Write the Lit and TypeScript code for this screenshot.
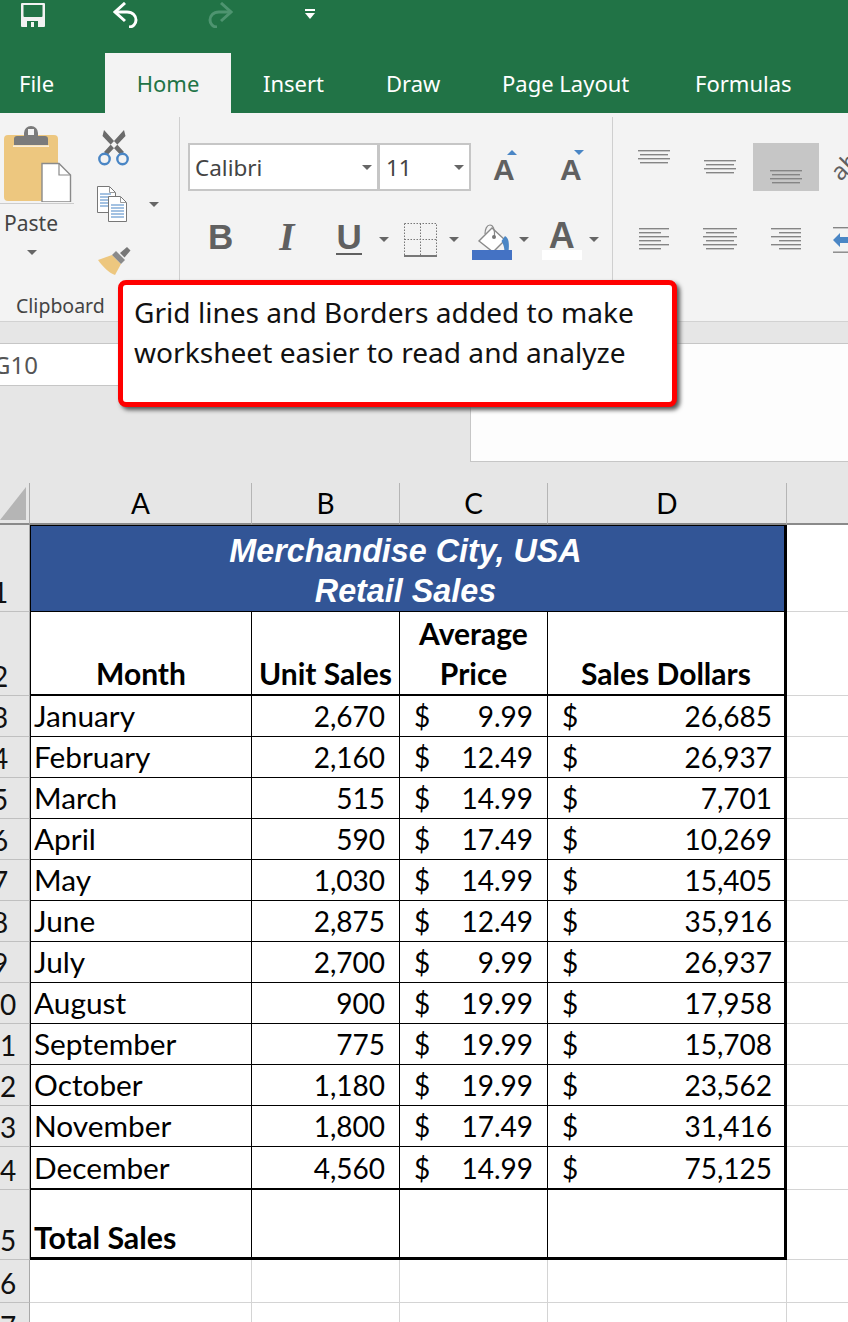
import { LitElement, css, html, svg } from 'lit'
import { customElement } from 'lit/decorators.js'

const months: [string, string, string, string][] = [
  ['January', '2,670', '9.99', '26,685'],
  ['February', '2,160', '12.49', '26,937'],
  ['March', '515', '14.99', '7,701'],
  ['April', '590', '17.49', '10,269'],
  ['May', '1,030', '14.99', '15,405'],
  ['June', '2,875', '12.49', '35,916'],
  ['July', '2,700', '9.99', '26,937'],
  ['August', '900', '19.99', '17,958'],
  ['September', '775', '19.99', '15,708'],
  ['October', '1,180', '19.99', '23,562'],
  ['November', '1,800', '17.49', '31,416'],
  ['December', '4,560', '14.99', '75,125'],
]

// stacked text lines used by the alignment buttons, [x, width] per line
const textLines = (w: number, lines: [number, number][]) => html`<svg
  width=${w}
  height=${lines.length * 4}
  viewBox="0 0 ${w} ${lines.length * 4}"
>
  ${lines.map(([x, lw], i) => svg`<rect x=${x} y=${i * 4 + 1} width=${lw} height="1.4" fill="#858585" />`)}
</svg>`

const vLines: [number, number][] = [
  [0, 32],
  [2, 28],
  [0, 32],
  [2, 28],
]
const leftLines: [number, number][] = [
  [0, 30],
  [0, 22],
  [0, 30],
  [0, 22],
  [0, 30],
  [0, 22],
]
const centerLines: [number, number][] = [
  [0, 34],
  [3, 28],
  [0, 34],
  [3, 28],
  [0, 34],
  [3, 28],
]
const rightLines: [number, number][] = [
  [0, 30],
  [8, 22],
  [0, 30],
  [8, 22],
  [0, 30],
  [8, 22],
]

@customElement('app-root')
export class AppRoot extends LitElement {
  static styles = css`
    :host {
      display: block;
      width: 848px;
      height: 1322px;
      overflow: hidden;
      position: relative;
      background: #fff;
      font-family: 'Noto Sans', sans-serif;
    }
    svg {
      display: block;
      flex: none;
    }

    .titlebar {
      background: #217346;
      height: 113px;
      display: flex;
      flex-direction: column;
    }
    .qat {
      height: 53px;
      display: flex;
      align-items: flex-start;
      padding: 2px 0 0 20px;
      box-sizing: border-box;
    }
    .qat .undo {
      margin-left: 67px;
    }
    .qat .redo {
      margin-left: 66px;
    }
    .qat .more {
      margin: 7px 0 0 72px;
    }
    .tabs {
      display: grid;
      grid-template-columns: 105px 126px 123px 116px 193px 1fr;
      height: 60px;
      color: #fff;
      font-size: 22px;
    }
    .tab {
      display: flex;
      align-items: center;
      padding: 0 0 1px 32px;
    }
    .tab.file {
      padding-left: 19px;
    }
    .tab.active {
      justify-content: center;
      padding-left: 0;
      background: #f3f3f3;
      color: #217346;
    }

    .ribbon {
      height: 209px;
      background: #f3f3f3;
      border-bottom: 1px solid #d2d2d2;
      box-sizing: border-box;
      display: flex;
      color: #444;
    }
    .group {
      margin-top: 4px;
      height: 204px;
      box-sizing: border-box;
      border-right: 1px solid #cfcfcf;
      flex: none;
    }
    .clip {
      width: 180px;
      display: grid;
      grid-template-columns: 76px 1fr;
      grid-template-rows: 1fr auto;
    }
    .paste {
      display: flex;
      flex-direction: column;
      padding-top: 9px;
    }
    .paste .rule {
      height: 1px;
      background: #ccc;
      width: 74px;
      margin-top: 1px;
    }
    .paste .label {
      font-size: 21px;
      line-height: 30px;
      margin: 4px 0 0 4px;
    }
    .paste .caret {
      margin: 12px 0 0 27px;
    }
    .tools {
      display: flex;
      flex-direction: column;
      padding: 13px 0 0 21px;
    }
    .copy-row {
      display: flex;
      align-items: center;
      margin-top: 20px;
    }
    .copy-row .caret {
      margin-left: 21px;
    }
    .brush {
      margin-top: 25px;
    }
    .group-label {
      grid-column: span 2;
      padding: 0 0 1px 16px;
      font-size: 19.5px;
      line-height: 28px;
      color: #444;
    }
    .caret {
      width: 0;
      height: 0;
      border-left: 5px solid transparent;
      border-right: 5px solid transparent;
      border-top: 5px solid #666;
      flex: none;
    }

    .font {
      width: 433px;
      padding: 26px 0 0 8px;
    }
    .font-row {
      display: flex;
      align-items: center;
      height: 48px;
    }
    .select {
      height: 48px;
      box-sizing: border-box;
      background: #fff;
      border: 2px solid #c6c6c6;
      display: flex;
      align-items: center;
      justify-content: space-between;
      padding: 0 5px 0 5px;
      font-size: 22.5px;
      color: #444;
    }
    .select.name {
      width: 191px;
    }
    .select.size {
      width: 93px;
      margin-left: -1px;
      padding-left: 6px;
    }
    .grow {
      position: relative;
      font: bold 30px 'Liberation Sans', sans-serif;
      color: #606060;
      width: 25px;
      line-height: 32px;
      margin-left: 22px;
      margin-top: 6px;
    }
    .grow + .grow {
      margin-left: 42px;
    }
    .grow i {
      position: absolute;
      left: 14px;
      top: -4px;
      width: 0;
      height: 0;
      border-left: 5.5px solid transparent;
      border-right: 5.5px solid transparent;
      border-bottom: 5px solid #4a86c5;
    }
    .grow i.down {
      border-bottom: 0;
      border-top: 5px solid #4a86c5;
    }
    .format-row {
      display: flex;
      align-items: center;
      margin-top: 26px;
      height: 40px;
      color: #606060;
    }
    .fmt {
      font: bold 35px/40px 'Liberation Sans', sans-serif;
      flex: none;
    }
    .fmt.b {
      margin-left: 20px;
    }
    .fmt.i {
      font: italic bold 39px/40px 'Liberation Serif', serif;
      margin-left: 46px;
    }
    .fmt.u {
      margin-left: 42px;
      border-bottom: 2px solid #606060;
      line-height: 32px;
      height: 32px;
      margin-top: 2px;
    }
    .format-row .caret {
      margin: 4px 0 0 17px;
    }
    .borders {
      margin: 5px 0 0 15px;
    }
    .format-row .caret.tight {
      margin-left: 12px;
    }
    .paint {
      margin: 9px 0 0 13px;
    }
    .format-row .caret.paint-caret {
      margin-left: 7px;
    }
    .color-a {
      margin: 10px 0 0 13px;
      width: 40px;
      display: flex;
      flex-direction: column;
      align-items: center;
      height: 40px;
    }
    .color-a b {
      font: bold 36px/28px 'Liberation Sans', sans-serif;
      height: 28px;
    }
    .color-a span {
      width: 40px;
      height: 10px;
      background: #fff;
    }

    .align {
      flex: 1;
      margin-top: 4px;
      display: grid;
      grid-template-columns: repeat(3, 66px) 1fr;
      grid-template-rows: 48px 48px;
      row-gap: 24px;
      padding: 26px 0 0 8px;
      min-width: 0;
      overflow: hidden;
    }
    .a-cell {
      display: flex;
      justify-content: center;
      padding: 6px 0;
      box-sizing: border-box;
    }
    .a-cell.mid {
      align-items: center;
    }
    .a-cell.end {
      align-items: flex-end;
      background: #c6c6c6;
    }
    .a-cell.row2 {
      align-items: center;
    }
    .ab {
      font-size: 24px;
      color: #606060;
      transform: rotate(-45deg);
      margin: 5px 0 0 15px;
      line-height: 32px;
      justify-self: start;
    }
    .indent {
      margin: 12px 0 0 14px;
    }

    .formula-area {
      background: #e6e6e6;
      height: 161px;
      padding-top: 21px;
      box-sizing: border-box;
      display: flex;
      align-items: flex-start;
    }
    .namebox {
      width: 300px;
      height: 43px;
      flex: none;
      background: #fff;
      box-sizing: border-box;
      border-top: 1px solid #c6c6c6;
      border-bottom: 1px solid #c6c6c6;
      overflow: hidden;
      display: flex;
      align-items: center;
      font-size: 24px;
      color: #555;
      text-indent: -7px;
    }
    .formula {
      margin-left: 170px;
      flex: 1;
      height: 119px;
      background: #fdfdfd;
      box-sizing: border-box;
      border-top: 1px solid #c6c6c6;
      border-left: 1px solid #c6c6c6;
      border-bottom: 1px solid #c6c6c6;
    }

    .callout {
      position: absolute;
      left: 118px;
      top: 280px;
      width: 559px;
      height: 127px;
      box-sizing: border-box;
      background: #fff;
      border: 5px solid #ff0000;
      border-radius: 8px;
      box-shadow: 3px 3px 4px #555;
      padding: 7px 0 0 11px;
      font-size: 28.1px;
      line-height: 40px;
      color: #111;
      white-space: pre;
    }

    .sheet {
      display: grid;
      grid-template-columns: 30px 222px 148px 148px 239px 61px;
      grid-template-rows: 42px 87px 84px 41px repeat(10, 41px) 43px 70px 43px 43px;
      font-family: Lato, sans-serif;
      font-size: 28px;
      color: #000;
    }
    .corner {
      background: #e6e6e6;
      border-right: 1px solid #aaa;
      border-bottom: 2px solid #8a8a8a;
      box-sizing: border-box;
      display: flex;
      align-items: flex-start;
      padding-top: 4px;
    }
    .col {
      background: #e6e6e6;
      border-right: 1px solid #b5b5b5;
      border-bottom: 2px solid #8a8a8a;
      box-sizing: border-box;
      display: flex;
      align-items: center;
      justify-content: center;
    }
    .col.last {
      border-right: 0;
    }
    .rh {
      background: #e6e6e6;
      border-right: 1px solid #a8a8a8;
      border-bottom: 1px solid #c0c0c0;
      box-sizing: border-box;
      overflow: hidden;
      display: flex;
      align-items: flex-end;
      line-height: 38px;
      color: #111;
    }
    /* the window is cropped through the middle of the row numbers */
    .rh span {
      flex: none;
      width: 60px;
      margin-left: -30px;
      text-align: center;
    }
    .cell {
      box-sizing: border-box;
      display: flex;
      align-items: flex-end;
      line-height: 40px;
      border-right: 1px solid #000;
      border-bottom: 1px solid #000;
      min-width: 0;
      white-space: nowrap;
    }
    .cell.a {
      border-left: 1px solid #000;
      padding-left: 3px;
      font-size: 29.8px;
    }
    .cell.d {
      border-right: 3px solid #000;
    }
    .cell.num {
      justify-content: flex-end;
      padding-right: 14px;
    }
    .cell.money {
      justify-content: space-between;
      padding: 0 14px;
    }
    .cell.money.d {
      padding-right: 12px;
    }
    .cell.head {
      font-weight: 700;
      font-size: 30px;
      justify-content: center;
      text-align: center;
      padding: 0 0 1px;
    }
    .cell.thick {
      border-bottom-width: 2px;
    }
    .cell.heavy {
      border-bottom-width: 3px;
    }
    .cell.bold {
      font-weight: 700;
      font-size: 30.4px;
    }
    .title {
      grid-column: span 4;
      background: #325596;
      color: #fff;
      font: italic bold 32.3px/40px 'Liberation Sans', sans-serif;
      text-align: center;
      border-left: 1px solid #000;
      border-top: 1px solid #000;
      border-right: 3px solid #000;
      border-bottom: 1px solid #000;
      box-sizing: border-box;
      padding: 5px 4px 0 0;
      white-space: nowrap;
    }
    .blank {
      border-right: 1px solid #d4d4d4;
      border-bottom: 1px solid #d4d4d4;
      box-sizing: border-box;
    }
    .blank.open {
      border-right: 0;
    }
  `

  private blankRow(label: number) {
    return html`
      <div class="rh"><span>${label}</span></div>
      <div class="blank"></div>
      <div class="blank"></div>
      <div class="blank"></div>
      <div class="blank"></div>
      <div class="blank open"></div>
    `
  }

  private renderRibbon() {
    return html`
      <div class="ribbon">
        <div class="group clip">
          <div class="paste">
            <svg width="74" height="76" viewBox="0 0 74 76">
              <rect x="4" y="9" width="54" height="66" rx="4" fill="#edc77f" />
              <path d="M14 19v-6a3 3 0 0 1 3-3h7v-3a7 7 0 0 1 14 0v3h7a3 3 0 0 1 3 3v6z" fill="#7b7b7b" />
              <rect x="13" y="19.500" width="36" height="1.200" fill="#fff" />
              <rect x="28" y="3" width="6" height="6" fill="#f3f3f3" />
              <path d="M42 37.500h17l11.500 11.500v27h-28.500z" fill="#fff" stroke="#8a8a8a" stroke-width="1.400" />
              <path d="M59 37.500v11.500h11.500" fill="none" stroke="#8a8a8a" stroke-width="1.200" />
            </svg>
            <div class="rule"></div>
            <div class="label">Paste</div>
            <div class="caret"></div>
          </div>
          <div class="tools">
            <svg width="34" height="36" viewBox="0 0 34 36">
              <path d="M7 0l20 22-3.500 3-18-19zM27 0l-20 22 3.500 3 18-19z" fill="#6b6b6b" />
              <circle cx="7.500" cy="29" r="5.200" fill="#f3f3f3" stroke="#4a86c5" stroke-width="2.400" />
              <circle cx="25.500" cy="29" r="5.200" fill="#f3f3f3" stroke="#4a86c5" stroke-width="2.400" />
            </svg>
            <div class="copy-row">
              <svg width="31" height="36" viewBox="0 0 31 36">
                <path d="M.5.500h12l6 6v20h-18z" fill="#fff" stroke="#777" />
                <path d="M12.500.500v6h6" fill="none" stroke="#999" />
                <path d="M3 8h11M3 11h11M3 14h11M3 17h11M3 20h11" stroke="#4a86c5" stroke-width="1.200" />
                <path d="M11.500 10.500h12l6 6v19h-18z" fill="#fff" stroke="#777" />
                <path d="M23.500 10.500v6h6" fill="none" stroke="#999" />
                <path d="M14 19h13M14 22h13M14 25h13M14 28h13M14 31h13" stroke="#4a86c5" stroke-width="1.200" />
              </svg>
              <div class="caret"></div>
            </div>
            <svg class="brush" width="34" height="28" viewBox="0 0 34 28">
              <path d="M1 13l14-5 9 9-6 11c-6-2-13-9-17-15z" fill="#edc77f" />
              <path d="M15 8l4-4 9 9-4 4z" fill="#8a8a8a" />
              <path d="M23 6l7-6 3.500 3.500-6 7z" fill="#777" />
            </svg>
          </div>
          <div class="group-label">Clipboard</div>
        </div>
        <div class="group font">
          <div class="font-row">
            <div class="select name"><span>Calibri</span><span class="caret"></span></div>
            <div class="select size"><span>11</span><span class="caret"></span></div>
            <div class="grow">A<i></i></div>
            <div class="grow">A<i class="down"></i></div>
          </div>
          <div class="format-row">
            <span class="fmt b">B</span>
            <span class="fmt i">I</span>
            <span class="fmt u">U</span>
            <span class="caret"></span>
            <svg class="borders" width="33" height="34" viewBox="0 0 33 34">
              <path d="M.5.500h32v32M.5.500v32M16.500.500v32M.5 16.500h32" fill="none" stroke="#777" stroke-width="1" stroke-dasharray="1.500 1.500" />
              <rect x="0" y="32" width="33" height="2" fill="#777" />
            </svg>
            <span class="caret tight"></span>
            <svg class="paint" width="40" height="40" viewBox="0 0 40 40">
              <path d="M20 6l-13 13 14 11 12-12z" fill="#fff" stroke="#8a8a8a" stroke-width="1.400" />
              <path d="M13 12c0-5 2-9 5-9s5 4 4.500 12" fill="none" stroke="#8a8a8a" stroke-width="1.200" />
              <circle cx="22" cy="15" r="2" fill="#777" />
              <path d="M33 14c4 2 4.500 8 3.500 16h-4c0-6-2-9-3-11z" fill="#4a86c5" />
              <rect x="0" y="28" width="40" height="10" fill="#4472c4" />
            </svg>
            <span class="caret paint-caret"></span>
            <div class="color-a"><b>A</b><span></span></div>
            <span class="caret paint-caret"></span>
          </div>
        </div>
        <div class="align">
          <div class="a-cell">${textLines(32, vLines)}</div>
          <div class="a-cell mid">${textLines(32, vLines)}</div>
          <div class="a-cell end">${textLines(32, vLines)}</div>
          <div class="ab">ab</div>
          <div class="a-cell row2">${textLines(30, leftLines)}</div>
          <div class="a-cell row2">${textLines(34, centerLines)}</div>
          <div class="a-cell row2">${textLines(30, rightLines)}</div>
          <svg class="indent" width="16" height="26" viewBox="0 0 16 26">
            <rect x="0" y="0" width="16" height="1.400" fill="#858585" />
            <rect x="0" y="24.500" width="16" height="1.400" fill="#858585" />
            <path d="M0 13l7-7v4h9v6h-9v4z" fill="#4a86c5" />
          </svg>
        </div>
      </div>
    `
  }

  private renderSheet() {
    return html`
      <div class="sheet">
        <div class="corner">
          <svg width="26" height="33" viewBox="0 0 26 33"><path d="M26 0v33h-26z" fill="#b5b5b5" /></svg>
        </div>
        <div class="col">A</div>
        <div class="col">B</div>
        <div class="col">C</div>
        <div class="col">D</div>
        <div class="col last"></div>

        <div class="rh"><span>1</span></div>
        <div class="title">Merchandise City, USA<br />Retail Sales</div>
        <div class="blank open"></div>

        <div class="rh"><span>2</span></div>
        <div class="cell a head thick">Month</div>
        <div class="cell head thick">Unit Sales</div>
        <div class="cell head thick"><div>Average<br />Price</div></div>
        <div class="cell d head thick">Sales Dollars</div>
        <div class="blank open"></div>

        ${months.map(
          ([m, u, p, s], i) => html`
            <div class="rh"><span>${i + 3}</span></div>
            <div class="cell a ${i === 11 ? 'thick' : ''}">${m}</div>
            <div class="cell num ${i === 11 ? 'thick' : ''}">${u}</div>
            <div class="cell money ${i === 11 ? 'thick' : ''}"><span>$</span><span>${p}</span></div>
            <div class="cell d money ${i === 11 ? 'thick' : ''}"><span>$</span><span>${s}</span></div>
            <div class="blank open"></div>
          `
        )}

        <div class="rh"><span>15</span></div>
        <div class="cell a bold heavy">Total Sales</div>
        <div class="cell heavy"></div>
        <div class="cell heavy"></div>
        <div class="cell d heavy"></div>
        <div class="blank open"></div>

        ${this.blankRow(16)} ${this.blankRow(17)}
      </div>
    `
  }

  render() {
    return html`
      <div class="titlebar">
        <div class="qat">
          <svg width="26" height="26" viewBox="0 0 26 26">
            <path
              fill-rule="evenodd"
              d="M2 1h22a1 1 0 0 1 1 1v22a1 1 0 0 1-1 1h-22a1 1 0 0 1-1-1v-22a1 1 0 0 1 1-1zM3.500 3v11a1 1 0 0 0 1 1h17a1 1 0 0 0 1-1v-11zM7 19v6h4v-5h3v5h4v-6z"
              fill="#f2f2f2"
            />
          </svg>
          <svg class="undo" width="26" height="26" viewBox="0 0 26 26" fill="none" stroke="#fff" stroke-width="3">
            <path d="M12 1l-10 9 10 9" />
            <path d="M3 10h11c6 0 9 4 9 8s-3 7-7 7" />
          </svg>
          <svg class="redo" width="28" height="26" viewBox="0 0 28 26" fill="none" stroke="#4e9470" stroke-width="3">
            <path d="M16 1l10 9-10 9" />
            <path d="M25 10h-11c-6 0-9 4-9 8s3 7 7 7" />
          </svg>
          <svg class="more" width="10" height="11" viewBox="0 0 10 11">
            <rect width="10" height="2" y="0" fill="#fff" />
            <path d="M0 4h10l-5 6z" fill="#fff" />
          </svg>
        </div>
        <div class="tabs">
          <div class="tab file">File</div>
          <div class="tab active">Home</div>
          <div class="tab">Insert</div>
          <div class="tab">Draw</div>
          <div class="tab">Page Layout</div>
          <div class="tab">Formulas</div>
        </div>
      </div>
      ${this.renderRibbon()}
      <div class="formula-area">
        <div class="namebox">G10</div>
        <div class="formula"></div>
      </div>
      ${this.renderSheet()}
      <div class="callout">Grid lines and Borders added to make
worksheet easier to read and analyze</div>
    `
  }
}
